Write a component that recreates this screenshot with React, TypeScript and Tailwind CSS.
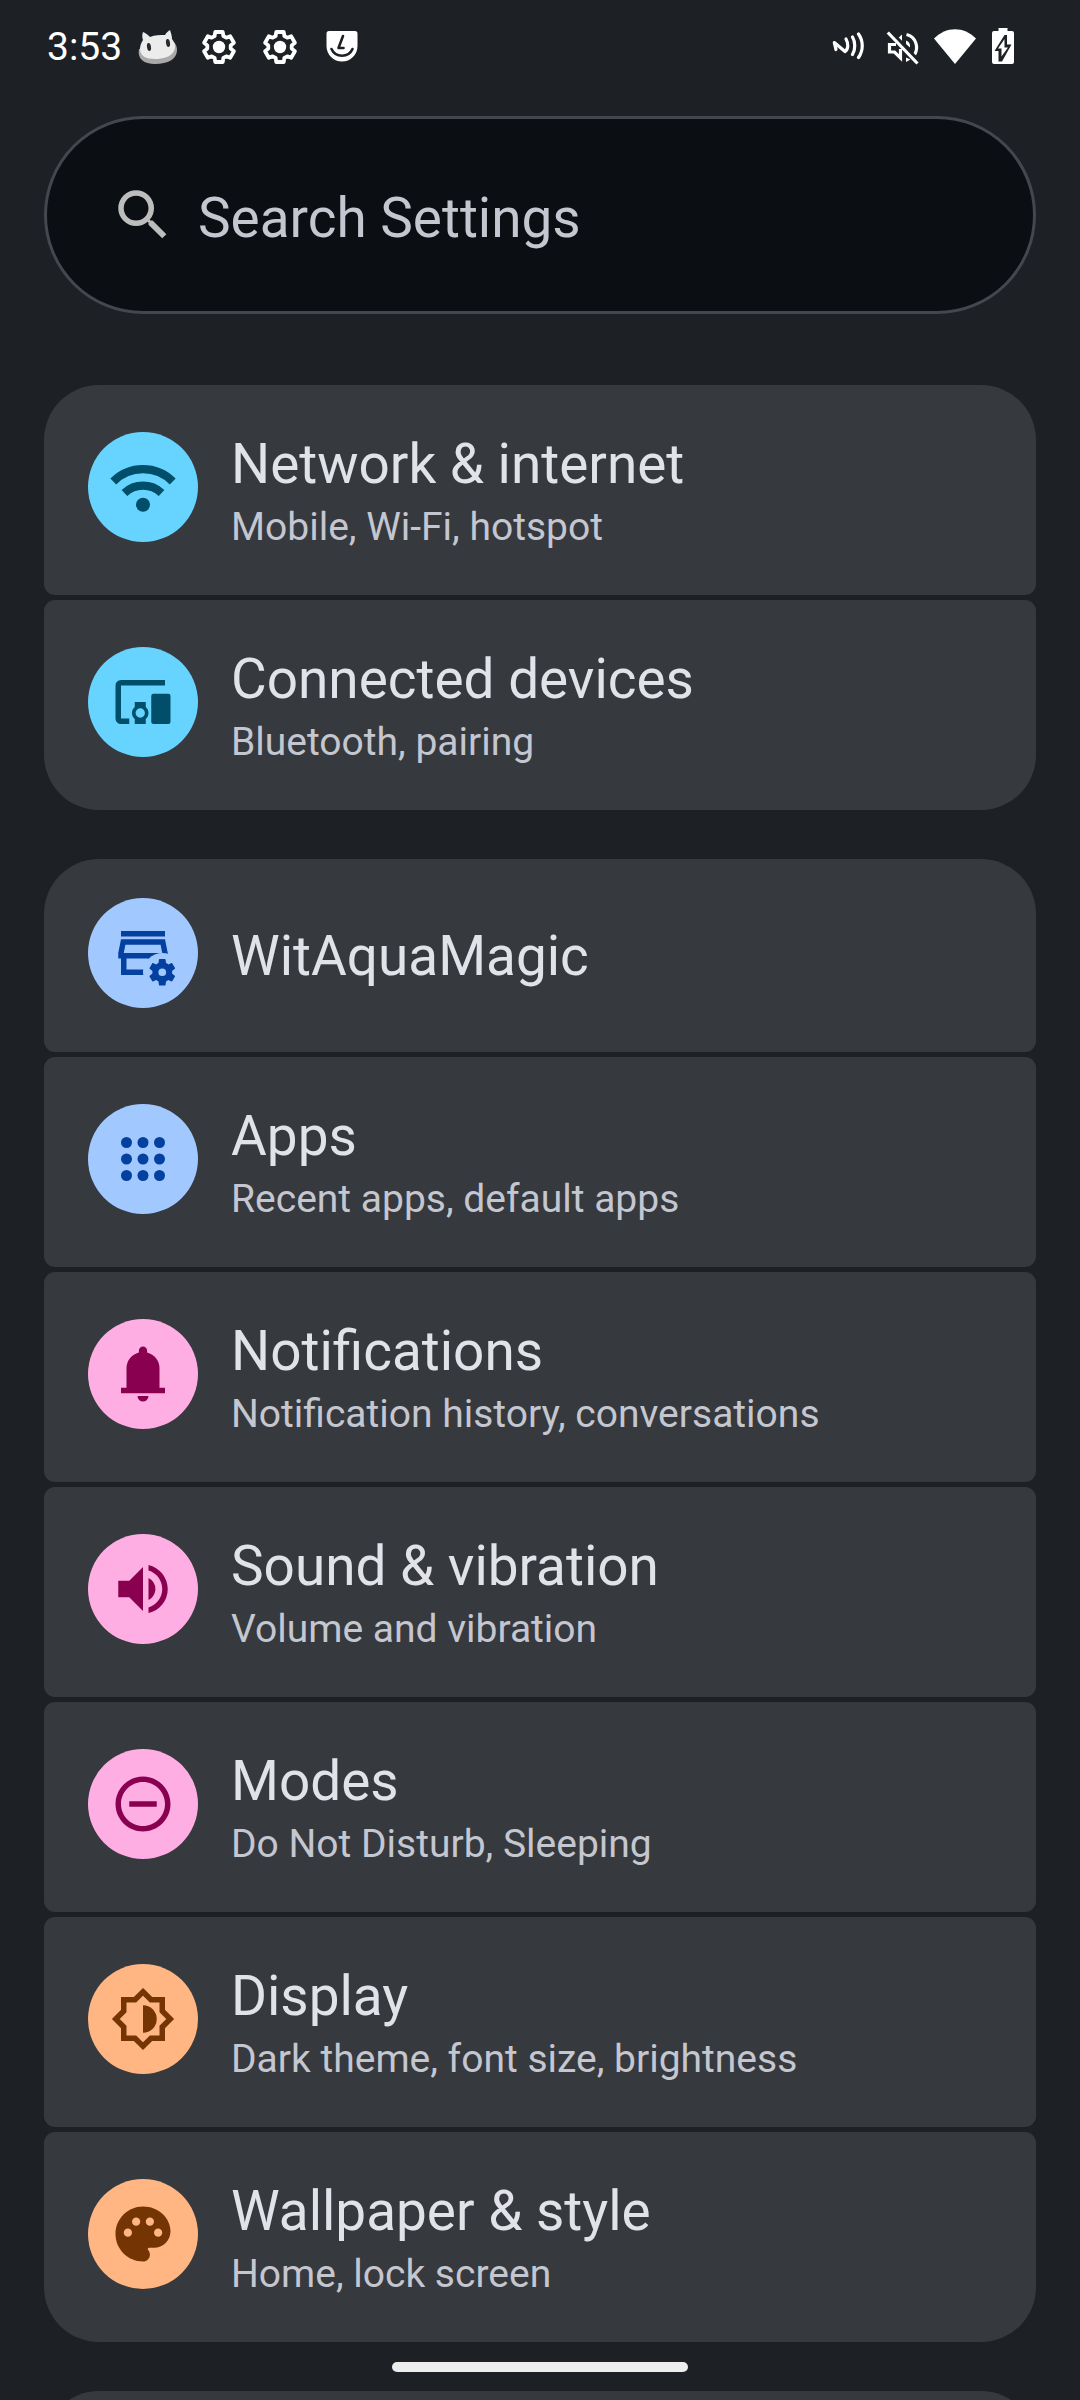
import type { ReactNode } from 'react';
import { clsx } from 'clsx';
import { MdRemoveCircleOutline, MdSearch, MdSettings, MdVolumeUp } from 'react-icons/md';

type Tone = 'cyan' | 'blue' | 'pink' | 'orange';

interface Item {
  title: string;
  summary?: string;
  tone: Tone;
  icon: ReactNode;
}

const TONES: Record<Tone, string> = {
  cyan: 'bg-[#67d4ff] text-[#004e69]',
  blue: 'bg-[#a1c9ff] text-[#04409f]',
  pink: 'bg-[#ffaee4] text-[#8a0050]',
  orange: 'bg-[#ffb683] text-[#753403]',
};

function Glyph({ children }: { children: ReactNode }) {
  return (
    <svg viewBox="0 0 24 24" className="size-[66px]" fill="currentColor">
      {children}
    </svg>
  );
}

function WifiIcon() {
  return (
    <Glyph>
      <g fill="none" stroke="currentColor" strokeWidth="3">
        <path d="M1.2 10a15.2 15.2 0 0 1 21.6 0" />
        <path d="M5.25 14.15a9.9 9.9 0 0 1 13.5 0" />
      </g>
      <circle cx="12" cy="18.45" r="2.55" />
    </Glyph>
  );
}

function DevicesIcon() {
  return (
    <Glyph>
      <path d="M20 4v2H4v12h3v2H4a2 2 0 0 1-2-2V6a2 2 0 0 1 2-2z" />
      <path
        fillRule="evenodd"
        d="M9 12h4v1.8c.6.5 1 1.3 1 2.2s-.4 1.7-1 2.2V20H9v-1.8c-.6-.5-1-1.3-1-2.2s.4-1.7 1-2.2zm2 2.3a1.7 1.7 0 1 0 0 3.4 1.7 1.7 0 0 0 0-3.4z"
      />
      <rect x="15" y="9" width="7" height="11" rx="0.8" />
    </Glyph>
  );
}

function StoreGearIcon() {
  return (
    <Glyph>
      <path d="M4 4h16v2H4z" />
      <path fillRule="evenodd" d="M4 7h16l1 5v2h-1v6H4v-6H3v-2zm1.6 2-.6 3h14l-.6-3zM6 14v4h8v-4z" />
      <circle cx="19" cy="19" r="7" fill="#a1c9ff" />
      <MdSettings x="13" y="13" size={12} />
      {/* narrows the gear's hole */}
      <path fillRule="evenodd" d="M19 17a2 2 0 1 0 0 4 2 2 0 0 0 0-4zm0 .6a1.4 1.4 0 1 1 0 2.8 1.4 1.4 0 0 1 0-2.8z" />
    </Glyph>
  );
}

function AppsIcon() {
  return (
    <Glyph>
      {[6, 12, 18].map((cy) => [6, 12, 18].map((cx) => <circle key={`${cx}-${cy}`} cx={cx} cy={cy} r="2" />))}
    </Glyph>
  );
}

function BellIcon() {
  return (
    <Glyph>
      <path d="M4 19v-2h2v-7q0-2.075 1.25-3.687T10.5 4.2v-.7q0-.625.438-1.062T12 2t1.063.438T13.5 3.5v.7q2 .5 3.25 2.113T18 10v7h2v2zm8 3q-.825 0-1.412-.587T10 20h4q0 .825-.587 1.413T12 22" />
    </Glyph>
  );
}

function BrightnessIcon() {
  return (
    <Glyph>
      <path
        fill="none"
        stroke="currentColor"
        strokeWidth="2"
        d="M12 2.1 14.9 5H19v4.1L21.9 12 19 14.9V19h-4.1L12 21.9 9.1 19H5v-4.1L2.1 12 5 9.1V5h4.1z"
      />
      <path d="M12 7a5 5 0 0 1 0 10z" />
    </Glyph>
  );
}

function PaletteIcon() {
  return (
    <Glyph>
      <path d="M12 2C6.49 2 2 6.49 2 12s4.49 10 10 10c1.38 0 2.5-1.12 2.5-2.5 0-.61-.23-1.2-.64-1.67a.5.5 0 0 1 .36-.83H16c3.31 0 6-2.69 6-6 0-4.96-4.49-9-10-9z" />
      <g fill="#ffb683">
        <circle cx="6.5" cy="11.5" r="1.5" />
        <circle cx="9.5" cy="7.5" r="1.5" />
        <circle cx="14.5" cy="7.5" r="1.5" />
        <circle cx="17.5" cy="11.5" r="1.5" />
      </g>
    </Glyph>
  );
}

const GROUPS: Item[][] = [
  [
    { title: 'Network & internet', summary: 'Mobile, Wi-Fi, hotspot', tone: 'cyan', icon: <WifiIcon /> },
    { title: 'Connected devices', summary: 'Bluetooth, pairing', tone: 'cyan', icon: <DevicesIcon /> },
  ],
  [
    { title: 'WitAquaMagic', tone: 'blue', icon: <StoreGearIcon /> },
    { title: 'Apps', summary: 'Recent apps, default apps', tone: 'blue', icon: <AppsIcon /> },
    { title: 'Notifications', summary: 'Notification history, conversations', tone: 'pink', icon: <BellIcon /> },
    { title: 'Sound & vibration', summary: 'Volume and vibration', tone: 'pink', icon: <MdVolumeUp size={66} /> },
    { title: 'Modes', summary: 'Do Not Disturb, Sleeping', tone: 'pink', icon: <MdRemoveCircleOutline size={66} /> },
    { title: 'Display', summary: 'Dark theme, font size, brightness', tone: 'orange', icon: <BrightnessIcon /> },
    { title: 'Wallpaper & style', summary: 'Home, lock screen', tone: 'orange', icon: <PaletteIcon /> },
  ],
];

function CatIcon() {
  return (
    <svg viewBox="0 0 42 36" className="h-9 w-[42px]">
      <path d="M2 20C0 30 7 35 18 35c13 0 22-5 22-14 0-3-1-6-3-8z" fill="#a9a9a9" />
      <path
        d="M6 3c3 1 5 3 7 5 5-2 10-2 15-2 1-2 3-4 5-5 1 3 2 6 2 9 3 4 4 8 2 12-3 6-11 8-19 8C9 30 3 27 3 20c0-3 1-6 3-9-1-3-1-5 0-8z"
        fill="#ececec"
      />
      <ellipse cx="12" cy="18" rx="2" ry="4" fill="#2b2b2f" transform="rotate(-8 12 18)" />
      <ellipse cx="31" cy="14" rx="2" ry="4" fill="#2b2b2f" transform="rotate(-8 31 14)" />
    </svg>
  );
}

function GearIcon() {
  return (
    <svg viewBox="-21 -21 42 42" className="size-[42px]" fill="none">
      <path
        d="M-4.4-10.9-3.75-15h7.5l.65 4.1 2.9 1.6 3.85-1.5 3.75 6.500-3.200 2.700v3.200l3.200 2.700-3.750 6.500-3.850-1.500-2.900 1.600-.65 4.100h-7.500l-.65-4.100-2.900-1.600-3.850 1.500-3.750-6.500 3.200-2.700v-3.200l-3.200-2.700 3.750-6.500 3.850 1.500z"
        stroke="#fff"
        strokeWidth="3.8"
        strokeLinejoin="round"
      />
      <circle r="6.2" fill="#fff" />
    </svg>
  );
}

function ShieldIcon() {
  return (
    <svg viewBox="0 0 32 32" className="size-8" fill="none">
      <path d="M3 0h26a2.5 2.5 0 0 1 2.5 2.5V15a15.5 15.5 0 0 1-31 0V2.5A2.5 2.5 0 0 1 3 0z" fill="#fff" />
      <g stroke="#1d2024" strokeWidth="2.6" strokeLinecap="round" strokeLinejoin="round">
        <path d="m17 5-4.500 12h5" />
        <path d="M5.500 18c4 9 17 9 21 0" />
      </g>
    </svg>
  );
}

function NfcIcon() {
  return (
    <svg viewBox="0 0 32 28" className="h-7 w-8" fill="none" stroke="#fff" strokeWidth="3.2" strokeLinecap="round">
      <path d="M4 17.500 2.300 10.500l10.700 9c3.500-2 3.500-8 1-12.500" strokeLinejoin="round" />
      <path d="M20.500 5c3 5 3 12.500 0 17.500M26.500 2c5 7 5 16.500 0 23.500" />
    </svg>
  );
}

function MutedIcon() {
  return (
    <svg viewBox="0 0 34 34" className="size-[34px]" fill="none" stroke="#fff" strokeWidth="3.2">
      <path d="M10 13.500H3.500v7.500h5l6 6V18" />
      <path d="m10.500 8.500 5.500-5V13zM20 9.500c3 1 4.500 3.500 4 7l-4-3.500zM20 26.500l4.500 2-4.500 2.500z" fill="#fff" stroke="none" />
      <path d="M20.500 3.500c9.500 2.500 12.500 12.500 8 20.500" />
      <path d="M5.500 1 35 32" stroke="#1d2024" strokeWidth="3" />
      <path d="M1.800 1.500 31.500 32.500" />
    </svg>
  );
}

function BatteryIcon() {
  return (
    <svg viewBox="0 0 22 36" className="h-9 w-[22px]">
      <path d="M6.5 0h9v3H20a2 2 0 0 1 2 2v29a2 2 0 0 1-2 2H2a2 2 0 0 1-2-2V5a2 2 0 0 1 2-2h4.500z" fill="#fff" />
      <path d="M12.500 7H15v9.500h4.500L10 33.500H6.500V23H2.500z" fill="#1d2024" />
      <path d="M12.500 11v8.500H16L9.500 28.500v-8H6z" fill="#fff" />
    </svg>
  );
}

function StatusBar() {
  return (
    <header className="flex h-[116px] items-start justify-between pr-[66px] pl-[47px] text-white">
      <div className="flex h-[94px] items-center">
        <span className="w-[90px] text-[39px]">3:53</span>
        <CatIcon />
        <span className="ml-[19px] flex gap-[19px]">
          <GearIcon />
          <GearIcon />
        </span>
        <span className="ml-[25px]">
          <ShieldIcon />
        </span>
      </div>
      <div className="flex h-[92px] items-center">
        <NfcIcon />
        <span className="mt-1 ml-[22px]">
          <MutedIcon />
        </span>
        <svg viewBox="0 0 42 35" className="ml-[14px] h-[35px] w-[42px]" fill="#fff">
          <path d="M21 35 0 9.500C12-3 30-3 42 9.500z" />
        </svg>
        <span className="ml-4">
          <BatteryIcon />
        </span>
      </div>
    </header>
  );
}

function Row({ item, first, last }: { item: Item; first: boolean; last: boolean }) {
  return (
    <div
      className={clsx(
        'flex gap-[33px] bg-[#36393e] px-11',
        item.summary ? 'h-[210px] pt-[47px]' : 'h-[193px] pt-[39px]',
        first ? 'rounded-t-[55px]' : 'rounded-t-[11px]',
        last ? 'rounded-b-[55px]' : 'rounded-b-[11px]',
      )}
    >
      <div className={clsx('flex size-[110px] shrink-0 items-center justify-center rounded-full', TONES[item.tone])}>
        {item.icon}
      </div>
      <div className={clsx(!item.summary && 'pt-[26px]')}>
        <div className="text-[54.9px] leading-[64px] text-[#e2e2e9]">{item.title}</div>
        {item.summary && <div className="mt-2 text-[39px] leading-[46px] text-[#c4c6d0]">{item.summary}</div>}
      </div>
    </div>
  );
}

export default function App() {
  return (
    <div className="relative h-[2400px] w-[1080px] overflow-hidden bg-[#1d2024] font-[Roboto,sans-serif]">
      <StatusBar />
      <main className="px-11">
        <div className="flex h-[198px] items-center gap-[22px] rounded-full border-[3px] border-[#44474e] bg-[#0b0e13] pl-[63px]">
          <MdSearch size={66} className="text-[#bdbdbd]" />
          <span className="pt-[6px] text-[54.9px] leading-[64px] text-[#c4c6d0]">Search Settings</span>
        </div>
        <div className="mt-[71px] flex flex-col gap-[49px]">
          {GROUPS.map((group) => (
            <section key={group[0].title} className="flex flex-col gap-[5px]">
              {group.map((item, i) => (
                <Row key={item.title} item={item} first={i === 0} last={i === group.length - 1} />
              ))}
            </section>
          ))}
          {/* top of the next group, cut off by the screen edge */}
          <section className="h-[210px] rounded-t-[55px] bg-[#36393e]" />
        </div>
      </main>
      {/* gesture bar */}
      <div className="absolute bottom-[28px] left-[392px] h-[10px] w-[296px] rounded-full bg-[#ededed]" />
    </div>
  );
}
